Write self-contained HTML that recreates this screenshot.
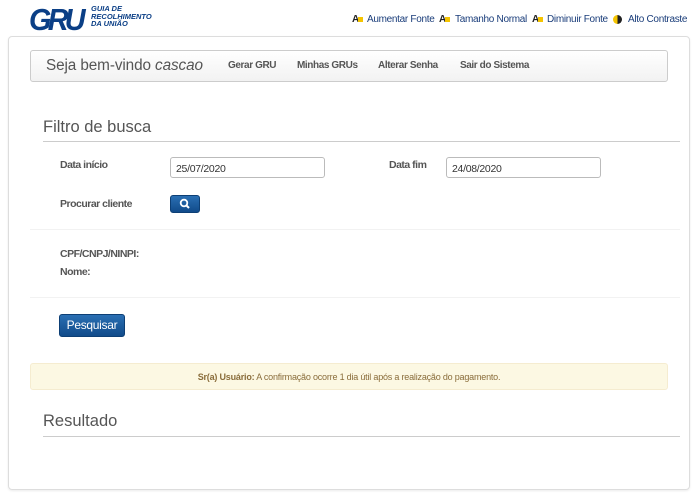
<!DOCTYPE html>
<html><head><meta charset="utf-8"><style>
body{margin:0;width:696px;height:498px;background:#fff;font-family:"Liberation Sans",sans-serif;position:relative;overflow:hidden}
.a{position:absolute;white-space:nowrap}
.lbl{font-size:10.5px;font-weight:bold;color:#555;letter-spacing:-.5px}
.inp{position:absolute;height:21px;border:1px solid #bbb;border-radius:3px;font-size:10.5px;color:#333;box-sizing:border-box;padding:5px 5px;letter-spacing:-.3px}
.btn{position:absolute;background:linear-gradient(#2a6fb3,#114b8a);border-radius:3px;border:1px solid #0d3f75}
.tb{font-size:10px;color:#1a3d7a;top:14px;letter-spacing:-.3px}
.ic{position:absolute;top:14px;font:bold 10px "Liberation Sans";color:#222}
.ic i{display:inline-block;width:5px;height:5px;background:#f5c400;margin-left:-1px}
.nav{font-size:10px;font-weight:bold;color:#555;top:60px;letter-spacing:-.4px}
</style></head><body>
<div class="a" style="left:29px;top:2px;font:italic 900 31px 'Liberation Sans';color:#0b3f86;letter-spacing:-4px;transform:scaleX(0.93);transform-origin:left">GRU</div>
<div class="a" style="left:91px;top:5px;font:italic bold 7.5px/7.5px 'Liberation Sans';color:#0b3f86">GUIA DE<br>RECOLHIMENTO<br>DA UNIÃO</div>
<div class="ic" style="left:352px">A<i></i></div>
<div class="a tb" style="left:367px">Aumentar Fonte</div>
<div class="ic" style="left:439px">A<i></i></div>
<div class="a tb" style="left:455px">Tamanho Normal</div>
<div class="ic" style="left:532px">A<i></i></div>
<div class="a tb" style="left:547px">Diminuir Fonte</div>
<div class="a" style="left:613px;top:15px;width:9px;height:9px;border-radius:50%;background:linear-gradient(90deg,#f5c400 50%,#222 50%)"></div>
<div class="a tb" style="left:628px">Alto Contraste</div>
<div class="a" style="left:8px;top:36px;width:682px;height:454px;border:1px solid #ddd;border-radius:4px;box-sizing:border-box;box-shadow:0 1px 2px rgba(0,0,0,.08)"></div>
<div class="a" style="left:30px;top:50px;width:638px;height:32px;border:1px solid #ccc;border-radius:3px;box-sizing:border-box;background:linear-gradient(#fff,#f2f2f2)"></div>
<div class="a" style="left:46px;top:57px;font-size:15.3px;color:#555;letter-spacing:-.1px">Seja bem-vindo <i>cascao</i></div>
<div class="a nav" style="left:228px">Gerar GRU</div>
<div class="a nav" style="left:297px">Minhas GRUs</div>
<div class="a nav" style="left:378px">Alterar Senha</div>
<div class="a nav" style="left:460px">Sair do Sistema</div>
<div class="a" style="left:43px;top:118px;font-size:16.5px;color:#555">Filtro de busca</div>
<div class="a" style="left:43px;top:141px;width:637px;height:1px;background:#ccc"></div>
<div class="a lbl" style="left:60px;top:159px">Data início</div>
<div class="inp" style="left:170px;top:157px;width:155px">25/07/2020</div>
<div class="a lbl" style="left:389px;top:159px">Data fim</div>
<div class="inp" style="left:446px;top:157px;width:155px">24/08/2020</div>
<div class="a lbl" style="left:60px;top:198px">Procurar cliente</div>
<div class="btn" style="left:170px;top:195px;width:30px;height:18px;box-sizing:border-box"><svg width="30" height="18" style="position:absolute;left:-1px;top:-1px"><circle cx="14" cy="8" r="3.3" fill="none" stroke="#fff" stroke-width="1.8"/><line x1="16.5" y1="10.5" x2="19" y2="13" stroke="#fff" stroke-width="2"/></svg></div>
<div class="a" style="left:30px;top:229px;width:650px;height:1px;background:#f2f2f2"></div>
<div class="a lbl" style="left:60px;top:248px">CPF/CNPJ/NINPI:</div>
<div class="a lbl" style="left:60px;top:266px">Nome:</div>
<div class="a" style="left:30px;top:297px;width:650px;height:1px;background:#f2f2f2"></div>
<div class="btn" style="left:59px;top:314px;width:66px;height:23px;box-sizing:border-box;color:#fff;font-size:12px;text-align:center;line-height:21px;letter-spacing:-.3px">Pesquisar</div>
<div class="a" style="left:30px;top:363px;width:638px;height:27px;background:#fcf8e3;border:1px solid #f5ecd0;border-radius:3px;box-sizing:border-box;text-align:center;font-size:9px;line-height:26px;color:#8a6d3b;letter-spacing:-.2px"><b>Sr(a) Usuário:</b> A confirmação ocorre 1 dia útil após a realização do pagamento.</div>
<div class="a" style="left:43px;top:412px;font-size:16.5px;color:#555">Resultado</div>
<div class="a" style="left:43px;top:436px;width:637px;height:1px;background:#ccc"></div>
</body></html>
